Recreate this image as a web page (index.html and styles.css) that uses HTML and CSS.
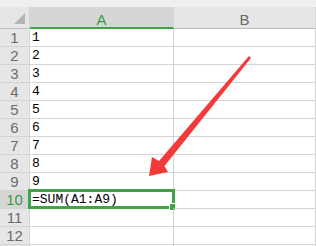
FILE: index.html
```html
<!DOCTYPE html>
<html>
<head>
    <title>Sheet</title>
    <link rel="stylesheet" href="styles.css">
</head>
<body>
    <div class="topbar"></div>
    <div class="sheet">
        <div class="corner"><span class="corner-tri"></span></div>
        <div class="col-head col-active">A</div>
        <div class="col-head">B</div>

        <div class="row-head">1</div><div class="cell">1</div><div class="cell"></div>
        <div class="row-head">2</div><div class="cell">2</div><div class="cell"></div>
        <div class="row-head">3</div><div class="cell">3</div><div class="cell"></div>
        <div class="row-head">4</div><div class="cell">4</div><div class="cell"></div>
        <div class="row-head">5</div><div class="cell">5</div><div class="cell"></div>
        <div class="row-head">6</div><div class="cell">6</div><div class="cell"></div>
        <div class="row-head">7</div><div class="cell">7</div><div class="cell"></div>
        <div class="row-head">8</div><div class="cell">8</div><div class="cell"></div>
        <div class="row-head">9</div><div class="cell">9</div><div class="cell"></div>
        <div class="row-head row-active">10</div><div class="cell cell-active">=SUM(A1:A9)<span class="sel-box"><span class="sel-handle"></span></span></div><div class="cell"></div>
        <div class="row-head">11</div><div class="cell"></div><div class="cell"></div>
        <div class="row-head">12</div><div class="cell"></div><div class="cell"></div>
        <div class="row-head"></div><div class="cell"></div><div class="cell"></div>
    </div>

    <!-- annotation arrow pointing at A10 -->
    <svg class="arrow" width="316" height="246" viewBox="0 0 316 246">
        <polygon points="249,56 159,161 152,157 149,176 168,172 164.5,166 251,58" fill="#f23a3a"/>
    </svg>
</body>
</html>
```

FILE: styles.css
```css
body {
    margin: 0;
    width: 316px;
    height: 246px;
    overflow: hidden;
    background-color: #fff;
    position: relative;
}

.topbar {
    height: 7px;
    background-color: #efefef;
}

.sheet {
    display: grid;
    grid-template-columns: 30px 144px 1fr;
    grid-template-rows: 22px;
    grid-auto-rows: 18px;
}

.corner,
.col-head,
.row-head,
.cell {
    box-sizing: border-box;
    border-right: 1px solid #d4d4d4;
    border-bottom: 1px solid #d4d4d4;
}

.corner {
    background-color: #e6e6e6;
    border-bottom-color: #bcbcbc;
    position: relative;
}

.corner-tri {
    position: absolute;
    right: 4px;
    bottom: 4px;
    width: 0;
    height: 0;
    border-left: 11px solid transparent;
    border-bottom: 11px solid #b5b5b5;
}

.col-head {
    background-color: #e6e6e6;
    border-bottom-color: #bcbcbc;
    color: #6b6b6b;
    font-family: "Liberation Sans", Arial, sans-serif;
    font-size: 15px;
    display: flex;
    align-items: center;
    justify-content: center;
    padding-top: 3px;
}

.col-active {
    background-color: #d6d6d6;
    border-bottom: 2px solid #3fa448;
    color: #3b9a44;
    padding-top: 4px;
}

.row-head {
    background-color: #e6e6e6;
    color: #6b6b6b;
    font-family: "Liberation Sans", Arial, sans-serif;
    font-size: 15px;
    display: flex;
    align-items: center;
    justify-content: center;
}

.row-active {
    background-color: #d6d6d6;
    color: #3b9a44;
}

.cell {
    font-family: "Liberation Mono", "Courier New", monospace;
    font-size: 13px;
    color: #000;
    padding-left: 2px;
    display: flex;
    align-items: center;
    position: relative;
}

.sel-box {
    position: absolute;
    left: -2px;
    top: -2px;
    width: 147px;
    height: 20px;
    box-sizing: border-box;
    border: 3px solid #3fa448;
}

.sel-handle {
    position: absolute;
    right: -3px;
    bottom: -4px;
    width: 5px;
    height: 6px;
    background-color: #3fa448;
    border-left: 1px solid #fff;
    border-top: 1px solid #fff;
}

.arrow {
    position: absolute;
    left: 0;
    top: 0;
}
```
